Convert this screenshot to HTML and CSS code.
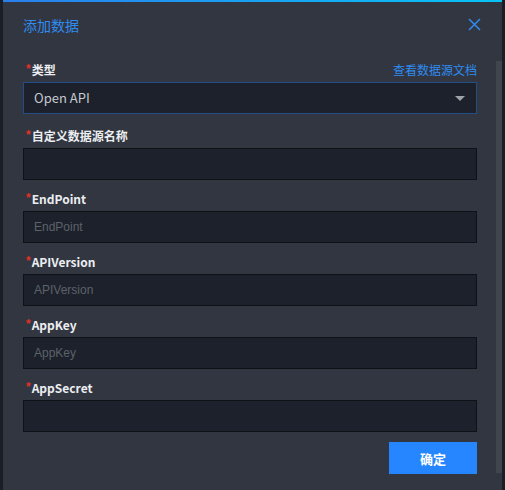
FILE: index.html
```html
<!DOCTYPE html>
<html lang="zh-CN">
<head>
<meta charset="utf-8">
<title>添加数据</title>
<link rel="stylesheet" href="styles.css">
</head>
<body>
<div class="page">
  <div class="modal">
    <div class="modal-header">
      <span class="modal-title">添加数据</span>
      <svg class="close" width="13" height="13" viewBox="0 0 13 13"><path d="M1 1L12 12M12 1L1 12" stroke="#2f8bf0" stroke-width="1.5" fill="none"/></svg>
    </div>
    <div class="modal-body">
      <div class="form">
        <div class="item item-first">
          <div class="label-row">
            <label class="label"><span class="req">*</span>类型</label>
            <span class="link">查看数据源文档</span>
          </div>
          <div class="select">
            <span class="select-value">Open API</span>
            <span class="caret"></span>
          </div>
        </div>
        <div class="item">
          <label class="label"><span class="req">*</span>自定义数据源名称</label>
          <div class="input"></div>
        </div>
        <div class="item">
          <label class="label"><span class="req">*</span>EndPoint</label>
          <div class="input"><span class="ph">EndPoint</span></div>
        </div>
        <div class="item">
          <label class="label"><span class="req">*</span>APIVersion</label>
          <div class="input"><span class="ph">APIVersion</span></div>
        </div>
        <div class="item">
          <label class="label"><span class="req">*</span>AppKey</label>
          <div class="input"><span class="ph">AppKey</span></div>
        </div>
        <div class="item">
          <label class="label"><span class="req">*</span>AppSecret</label>
          <div class="input"></div>
        </div>
        <div class="footer">
          <button class="btn">确定</button>
        </div>
      </div>
      <div class="scrollbar"><div class="thumb"></div></div>
    </div>
  </div>
</div>
</body>
</html>
```

FILE: styles.css
```css
html, body {
  margin: 0;
  padding: 0;
  background: #1b1f26;
  font-family: "Noto Sans CJK SC", "Noto Sans", sans-serif;
}
.page {
  width: 505px;
  height: 490px;
  overflow: hidden;
  display: flex;
  background: #1a1e25;
}
.modal {
  margin-left: 3px;
  width: 499px;
  height: 490px;
  background: #313640;
  border-top: 2px solid transparent;
  border-image: linear-gradient(90deg, #2a7fec, #07c4f6) 1;
  border-left: 0;
  border-right: 0;
  border-bottom: 0;
  display: flex;
  flex-direction: column;
  box-sizing: border-box;
}
.modal-header {
  height: 46px;
  flex: none;
  display: flex;
  align-items: center;
  justify-content: space-between;
  padding: 0 21px 0 20px;
}
.modal-title {
  color: #2f8bf0;
  font-size: 14px;
  line-height: 20px;
}
.close { display: block; margin-top: -2px; }
.modal-body {
  flex: 1;
  display: flex;
}
.form {
  width: 454px;
  padding: 12px 19px 0 20px;
}
.item { margin-bottom: 9px; }
.item-first { margin-bottom: 12px; }
.label-row {
  display: flex;
  justify-content: space-between;
  align-items: center;
}
.label {
  display: block;
  height: 20px;
  line-height: 20px;
  margin-bottom: 2px;
  color: #eceef1;
  font-size: 12px;
  font-weight: 700;
}
.req {
  color: #e3312a;
  font-family: "Liberation Sans", sans-serif;
  font-weight: 700;
  font-size: 12px;
  position: relative;
  top: -2px;
  margin: 0 1px 0 3px;
}
.link {
  color: #2f8bf0;
  font-size: 12px;
  line-height: 20px;
  margin-bottom: 2px;
}
.select, .input {
  height: 32px;
  box-sizing: border-box;
  background: #1c212b;
  border: 1px solid #0e1116;
  display: flex;
  align-items: center;
  padding: 0 10px;
}
.select {
  border-color: #244d86;
  justify-content: space-between;
  padding-right: 11px;
}
.select-value {
  color: #c6cad0;
  font-size: 13px;
  line-height: 20px;
}
.caret {
  width: 0;
  height: 0;
  border-left: 5px solid transparent;
  border-right: 5px solid transparent;
  border-top: 5px solid #9ea3aa;
}
.ph {
  color: #5d626a;
  font-family: "Liberation Sans", Arial, sans-serif;
  font-size: 12px;
}
.footer {
  display: flex;
  justify-content: flex-end;
  padding-top: 1px;
}
.btn {
  width: 88px;
  height: 32px;
  border: 0;
  background: #2686ff;
  color: #fff;
  font-family: "Noto Sans CJK SC", sans-serif;
  font-size: 13px;
  font-weight: 700;
  padding: 0;
}
.scrollbar {
  width: 6px;
  padding-top: 13px;
}
.thumb {
  width: 6px;
  height: 412px;
  background: #40454e;
}
```
